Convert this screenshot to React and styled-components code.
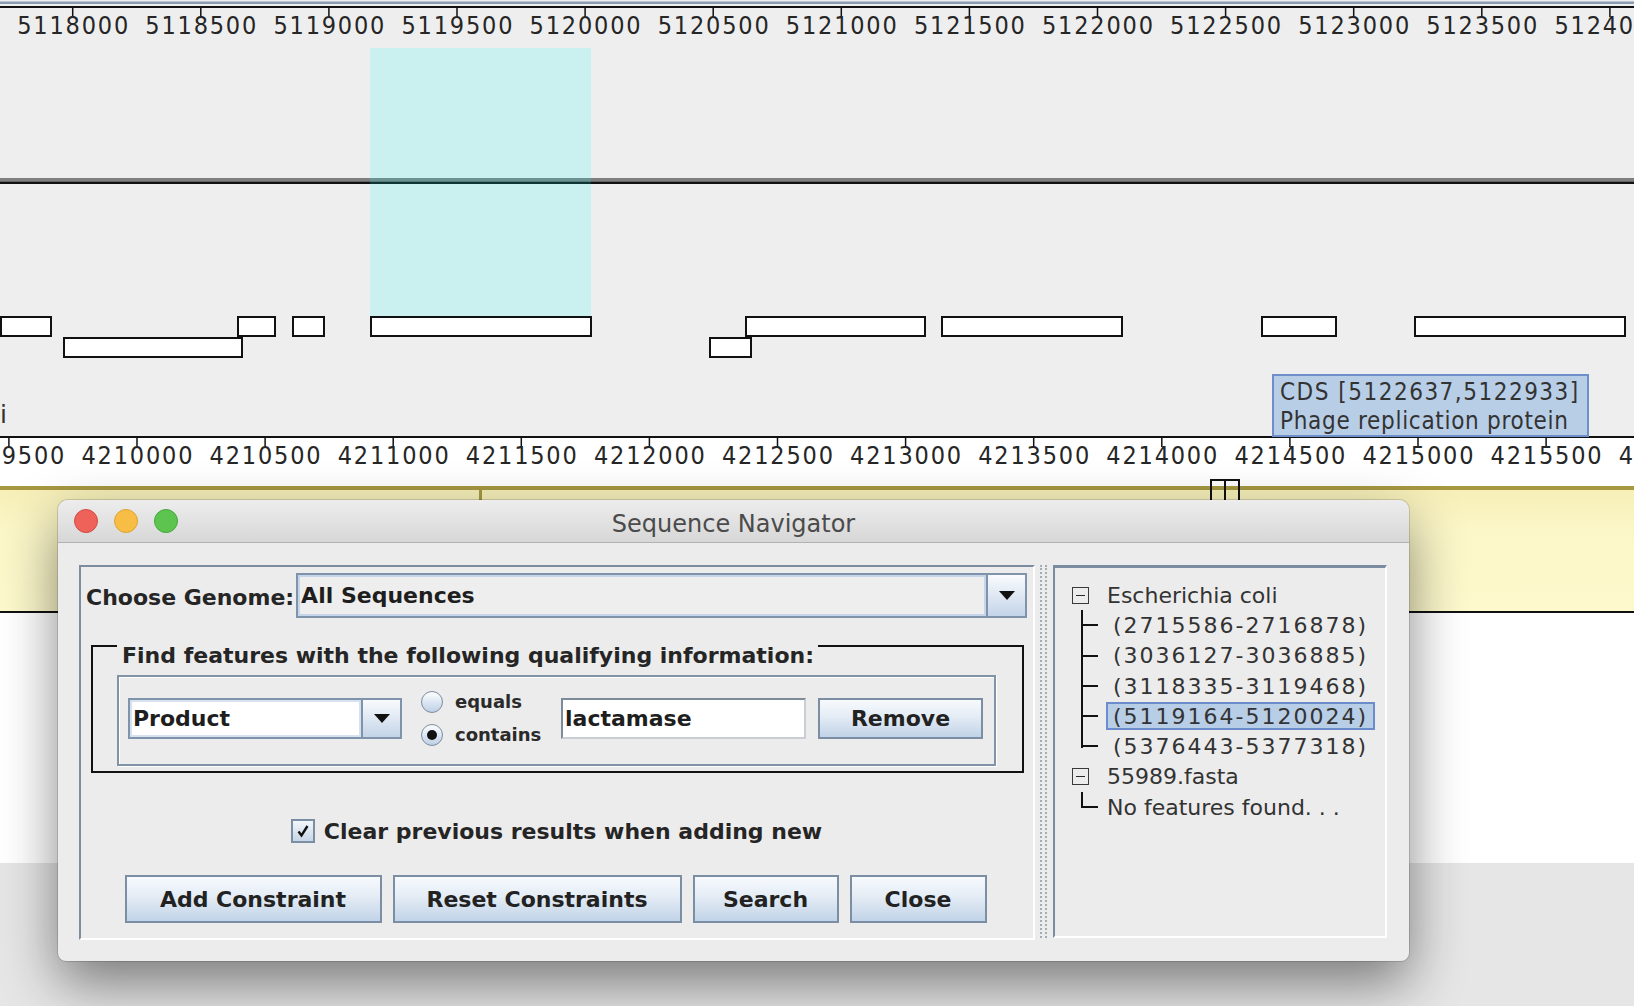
import React from 'react';
import styled, { createGlobalStyle } from 'styled-components';

const GlobalStyle = createGlobalStyle`
  html, body { margin: 0; padding: 0; }
  body {
    width: 1634px; height: 1006px; overflow: hidden;
    background: #e6e6e6;
    font-family: "DejaVu Sans", "Liberation Sans", sans-serif;
  }
`;

/* ---------- page / browser tracks ---------- */
const Page = styled.div`
  position: relative;
  width: 1634px;
  height: 1006px;
  display: flex;
  flex-direction: column;
  background: #e6e6e6;
  overflow: hidden;
`;

const TrackPanel = styled.div`
  flex: none;
  height: 436px;
  background: #eeeeee;
`;

const LowerRuler = styled.div`
  flex: none;
  height: 50px;
  background: #ffffff;
`;

const Chart = styled.svg`
  display: block;
  overflow: visible;
`;

const RulerText = styled.text`
  font-family: "DejaVu Sans Condensed", "DejaVu Sans", sans-serif;
  font-stretch: condensed;
  font-size: 25px;
  fill: #262626;
`;

const TrackLabel = styled.text`
  font-family: "DejaVu Sans", sans-serif;
  font-size: 25px;
  fill: #333;
`;

const Band = styled.div`
  flex: none;
  height: 121px;
  display: flex;
  border-top: 4px solid #a69840;
  border-bottom: 2px solid #111;
  background: linear-gradient(#f6efb8, #fcf7c8 35%, #fdf9cc);
`;

const BandSegment = styled.div`
  flex: ${p => (p.$w ? 'none' : '1')};
  width: ${p => (p.$w ? `${p.$w}px` : 'auto')};
  border-right: ${p => (p.$w ? '3px solid #a69840' : 'none')};
`;

const WhiteArea = styled.div`
  flex: none;
  height: 250px;
  background: #ffffff;
`;

const Floor = styled.div`
  flex: 1;
  background: #e6e6e6;
`;

const Tooltip = styled.div`
  position: absolute;
  left: 1272px;
  top: 374px;
  width: 317px;
  height: 63px;
  box-sizing: border-box;
  padding: 2px 6px 0 6px;
  background: #b8cee7;
  border: 2px solid #6f8fca;
  font-family: "DejaVu Sans Condensed", "DejaVu Sans", sans-serif;
  font-stretch: condensed;
  font-size: 24px;
  line-height: 29px;
  color: #333;
  white-space: nowrap;
`;

const TipLine = styled.div`
  letter-spacing: ${p => p.$ls}px;
`;

const Marker = styled.div`
  position: absolute;
  left: 1210px;
  top: 479px;
  width: 30px;
  height: 24px;
  box-sizing: border-box;
  border: 2px solid #111;
  border-bottom: none;
  &::after {
    content: '';
    position: absolute;
    left: 12px;
    top: 0;
    bottom: 0;
    width: 2px;
    background: #111;
  }
`;

/* ---------- dialog window ---------- */
const Window = styled.div`
  position: absolute;
  left: 58px;
  top: 500px;
  width: 1351px;
  height: 461px;
  display: flex;
  flex-direction: column;
  background: #ececec;
  border-radius: 10px 10px 8px 8px;
  overflow: hidden;
  box-shadow: 0 0 0 1px rgba(0, 0, 0, 0.14), 0 22px 55px rgba(0, 0, 0, 0.48);
  font-family: "DejaVu Sans", sans-serif;
  color: #222;
`;

const TitleBar = styled.div`
  flex: none;
  height: 42px;
  display: grid;
  grid-template-columns: 1fr auto 1fr;
  align-items: center;
  background: linear-gradient(#ededed, #d7d7d7);
  border-bottom: 1px solid #b2b2b2;
`;

const Lights = styled.div`
  display: flex;
  gap: 16px;
  padding-left: 16px;
`;

const Light = styled.span`
  width: 24px;
  height: 24px;
  box-sizing: border-box;
  border-radius: 50%;
  background: ${p => p.$c};
  border: 1px solid ${p => p.$b};
`;

const Title = styled.div`
  font-size: 24px;
  color: #4b4b4b;
  padding-top: 5px;
`;

const Body = styled.div`
  flex: 1;
  display: flex;
  align-items: flex-start;
  padding: 22px 22px 0 21px;
`;

const LeftPanel = styled.div`
  flex: none;
  width: 956px;
  height: 375px;
  box-sizing: border-box;
  border: 2px solid;
  border-color: #7d8da1 #ffffff #ffffff #7d8da1;
  padding: 6px 6px 0 5px;
  display: flex;
  flex-direction: column;
`;

const GenomeRow = styled.div`
  display: flex;
  align-items: center;
  height: 45px;
`;

const FieldLabel = styled.span`
  font-size: 22px;
  font-weight: bold;
  color: #252525;
  white-space: nowrap;
  padding-top: 4px;
`;

const ComboBox = styled.div`
  display: flex;
  box-sizing: border-box;
  height: ${p => p.$h}px;
  flex: ${p => (p.$w ? 'none' : '1')};
  width: ${p => (p.$w ? `${p.$w}px` : 'auto')};
  margin-left: ${p => p.$ml || 0}px;
  border: 2px solid #7f93aa;
  background: ${p => (p.$white ? '#ffffff' : '#eeeeee')};
`;

const ComboValue = styled.div`
  flex: 1;
  display: flex;
  align-items: center;
  padding-left: 3px;
  box-shadow: inset 0 0 0 2px ${p => (p.$white ? '#d6e2f0' : '#c6d6ea')};
  font-size: 22px;
  font-weight: bold;
  color: #1e1e1e;
  white-space: nowrap;
`;

const ComboArrow = styled.div`
  flex: none;
  width: ${p => p.$w}px;
  border-left: 2px solid #7f93aa;
  background: linear-gradient(#f8fbfe, #e2eaf4 45%, #c3d4e8);
  display: flex;
  align-items: center;
  justify-content: center;
`;

const Triangle = styled.span`
  width: 0;
  height: 0;
  border-left: 8px solid transparent;
  border-right: 8px solid transparent;
  border-top: 9px solid #111;
`;

const GroupBox = styled.div`
  position: relative;
  margin: 27px 3px 0 5px;
  height: 128px;
  box-sizing: border-box;
  border: 2px solid #111;
  padding: 28px 26px 5px 24px;
`;

const GroupTitle = styled.span`
  position: absolute;
  left: 24px;
  top: -6px;
  padding: 0 4px 0 5px;
  background: #ececec;
  font-size: 22px;
  font-weight: bold;
  line-height: 30px;
  color: #252525;
  white-space: nowrap;
`;

const ConstraintPanel = styled.div`
  height: 91px;
  box-sizing: border-box;
  border: 2px solid #8194a7;
  box-shadow: 1px 1px 0 #ffffff, inset 1px 1px 0 #ffffff;
  padding: 15px 9px 20px 9px;
  display: flex;
  align-items: center;
`;

const RadioGroup = styled.div`
  flex: none;
  display: flex;
  flex-direction: column;
  gap: 5px;
  margin-left: 19px;
  width: 120px;
`;

const RadioRow = styled.label`
  display: flex;
  align-items: center;
  gap: 12px;
  height: 28px;
  font-size: 18px;
  font-weight: bold;
  color: #2a2a2a;
`;

const RadioDot = styled.span`
  flex: none;
  width: 22px;
  height: 22px;
  box-sizing: border-box;
  border-radius: 50%;
  border: 1px solid #7b8ca1;
  background: linear-gradient(#ffffff, #d9e4f1 55%, #bfd0e5);
  display: flex;
  align-items: center;
  justify-content: center;
  &::after {
    content: '';
    width: 10px;
    height: 10px;
    border-radius: 50%;
    background: ${p => (p.$on ? '#111' : 'transparent')};
  }
`;

const TextField = styled.div`
  flex: none;
  width: 245px;
  height: 41px;
  box-sizing: border-box;
  margin-left: 20px;
  background: #ffffff;
  border: 2px solid;
  border-color: #7c8a99 #c9ced4 #c9ced4 #7c8a99;
  display: flex;
  align-items: center;
  padding-left: 2px;
  font-size: 22px;
  font-weight: bold;
  color: #1e1e1e;
`;

const Button = styled.button`
  flex: none;
  width: ${p => p.$w}px;
  height: ${p => p.$h || 48}px;
  margin-left: ${p => p.$ml || 0}px;
  box-sizing: border-box;
  border: 2px solid #7c8ea4;
  border-radius: 0;
  padding: 0;
  background: linear-gradient(#f7fafd, #e4ecf5 45%, #c1d3e8);
  font-family: "DejaVu Sans", sans-serif;
  font-size: 22px;
  font-weight: bold;
  color: #222;
`;

const CheckRow = styled.label`
  margin-top: 46px;
  height: 24px;
  display: flex;
  align-items: center;
  justify-content: center;
  gap: 9px;
  font-size: 22px;
  font-weight: bold;
  color: #252525;
`;

const CheckBox = styled.span`
  flex: none;
  width: 24px;
  height: 24px;
  box-sizing: border-box;
  border: 2px solid #7c8ea3;
  background: linear-gradient(#f3f7fb, #c6d5e7);
  display: flex;
  align-items: center;
  justify-content: center;
`;

const ButtonRow = styled.div`
  margin-top: 32px;
  display: flex;
  justify-content: center;
  gap: 11px;
  padding-right: 2px;
`;

const Divider = styled.div`
  flex: none;
  width: 3px;
  height: 373px;
  margin: 0 6px 0 5px;
  border-left: 2px dotted #a3adb8;
  border-right: 2px dotted #a3adb8;
`;

const TreePanel = styled.div`
  flex: none;
  width: 334px;
  height: 373px;
  box-sizing: border-box;
  border: 2px solid;
  border-top-width: 3px;
  border-color: #7c8ca0 #ffffff #ffffff #7c8ca0;
  padding: 12px 0 0 17px;
  display: flex;
  flex-direction: column;
`;

const TreeRow = styled.div`
  height: 30.3px;
  display: flex;
  align-items: center;
`;

const Toggle = styled.span`
  position: relative;
  flex: none;
  width: 17px;
  height: 17px;
  box-sizing: border-box;
  border: 1px solid #3a3a3a;
  &::after {
    content: '';
    position: absolute;
    left: 3px;
    right: 3px;
    top: 7px;
    height: 1px;
    background: #2a2a2a;
  }
`;

const Connector = styled.span`
  position: relative;
  flex: none;
  width: 26px;
  height: 100%;
  &::before {
    content: '';
    position: absolute;
    left: 9px;
    top: 0;
    bottom: ${p => (p.$last ? '14px' : '0')};
    width: 2px;
    background: #111;
  }
  &::after {
    content: '';
    position: absolute;
    left: 9px;
    top: 14px;
    width: 17px;
    height: 2px;
    background: #111;
  }
`;

const NodeLabel = styled.span`
  height: 28px;
  box-sizing: border-box;
  display: flex;
  align-items: center;
  margin-left: ${p => p.$ml}px;
  padding: 0 5px;
  border: 2px solid ${p => (p.$sel ? '#6c8dcb' : 'transparent')};
  background: ${p => (p.$sel ? '#b8cde6' : 'transparent')};
  font-size: 22px;
  color: #333;
  letter-spacing: ${p => (p.$num ? '2px' : '0')};
  white-space: nowrap;
`;

/* ---------- data ---------- */
const TOP_X0 = 72.7;
const LOW_X0 = 137;
const STEP = 128.1;

const topTicks = Array.from({ length: 13 }, (_, k) => ({
  x: TOP_X0 + k * STEP,
  label: String(5118000 + k * 500),
}));
const lowTicks = Array.from({ length: 14 }, (_, k) => ({
  x: LOW_X0 + (k - 1) * STEP,
  label: String(4209500 + k * 500),
}));

const features = [
  [0, 316, 52], [237, 316, 39], [292, 316, 33], [370, 316, 222],
  [745, 316, 181], [941, 316, 182], [1261, 316, 76], [1414, 316, 212],
  [63, 337, 180], [709, 337, 43],
];

const tree = [
  { group: true, label: 'Escherichia coli' },
  { label: '(2715586-2716878)', num: true },
  { label: '(3036127-3036885)', num: true },
  { label: '(3118335-3119468)', num: true },
  { label: '(5119164-5120024)', num: true, sel: true },
  { label: '(5376443-5377318)', num: true, last: true },
  { group: true, label: '55989.fasta' },
  { label: 'No features found. . .', last: true, flush: true },
];

function Ruler({ ticks, top, labelY }) {
  return (
    <>
      <rect x="0" y={top} width="1634" height="2" fill="#111" />
      {ticks.map(t => (
        <g key={t.label}>
          <rect x={t.x - 0.75} y={top + 2} width="1.5" height="9" fill="#111" />
          <RulerText x={t.x} y={labelY} textAnchor="middle" textLength="111" lengthAdjust="spacing">
            {t.label}
          </RulerText>
        </g>
      ))}
    </>
  );
}

export default function App() {
  return (
    <>
      <GlobalStyle />
      <Page>
        <TrackPanel>
          <Chart width="1634" height="436" viewBox="0 0 1634 436">
            <rect x="0" y="1.5" width="1634" height="2.5" fill="#8b9db1" />
            <Ruler ticks={topTicks} top={6} labelY={34} />
            <rect x="0" y="178" width="1634" height="3.5" fill="#7f7f7f" />
            <rect x="0" y="181.5" width="1634" height="2.5" fill="#111" />
            <rect x="370" y="48" width="221" height="268" fill="rgba(0,255,255,0.15)" />
            {features.map(([x, y, w], i) => (
              <rect key={i} x={x + 1} y={y + 1} width={w - 2} height="19" fill="#fff" stroke="#111" strokeWidth="2" />
            ))}
            <TrackLabel x="0" y="423">i</TrackLabel>
          </Chart>
        </TrackPanel>
        <LowerRuler>
          <Chart width="1634" height="50" viewBox="0 0 1634 50">
            <Ruler ticks={lowTicks} top={0} labelY={28} />
          </Chart>
        </LowerRuler>
        <Band>
          <BandSegment $w={479} />
          <BandSegment />
        </Band>
        <WhiteArea />
        <Floor />

        <Tooltip>
          <TipLine $ls={1.5}>CDS [5122637,5122933]</TipLine>
          <TipLine $ls={0.7}>Phage replication protein</TipLine>
        </Tooltip>
        <Marker />

        <Window>
          <TitleBar>
            <Lights>
              <Light $c="#ee6259" $b="#d24b43" />
              <Light $c="#f8bd45" $b="#dea333" />
              <Light $c="#5cc44f" $b="#43a83a" />
            </Lights>
            <Title>Sequence Navigator</Title>
            <span />
          </TitleBar>
          <Body>
            <LeftPanel>
              <GenomeRow>
                <FieldLabel>Choose Genome:</FieldLabel>
                <ComboBox $h={45} $ml={2}>
                  <ComboValue>All Sequences</ComboValue>
                  <ComboArrow $w={37}><Triangle /></ComboArrow>
                </ComboBox>
              </GenomeRow>
              <GroupBox>
                <GroupTitle>Find features with the following qualifying information:</GroupTitle>
                <ConstraintPanel>
                  <ComboBox $h={41} $w={274} $white>
                    <ComboValue $white>Product</ComboValue>
                    <ComboArrow $w={37}><Triangle /></ComboArrow>
                  </ComboBox>
                  <RadioGroup>
                    <RadioRow><RadioDot />equals</RadioRow>
                    <RadioRow><RadioDot $on />contains</RadioRow>
                  </RadioGroup>
                  <TextField>lactamase</TextField>
                  <Button $w={165} $h={41} $ml={12}>Remove</Button>
                </ConstraintPanel>
              </GroupBox>
              <CheckRow>
                <CheckBox>
                  <svg width="14" height="14" viewBox="0 0 14 14">
                    <path d="M2.5 7.5 L5.5 11.5 L11.5 2" fill="none" stroke="#111" strokeWidth="2.4" />
                  </svg>
                </CheckBox>
                Clear previous results when adding new
              </CheckRow>
              <ButtonRow>
                <Button $w={257}>Add Constraint</Button>
                <Button $w={289}>Reset Constraints</Button>
                <Button $w={146}>Search</Button>
                <Button $w={137}>Close</Button>
              </ButtonRow>
            </LeftPanel>
            <Divider />
            <TreePanel>
              {tree.map((n, i) =>
                n.group ? (
                  <TreeRow key={i}>
                    <Toggle />
                    <NodeLabel $ml={11}>{n.label}</NodeLabel>
                  </TreeRow>
                ) : (
                  <TreeRow key={i}>
                    <Connector $last={n.last} />
                    <NodeLabel $ml={n.flush ? 2 : 8} $num={n.num} $sel={n.sel}>{n.label}</NodeLabel>
                  </TreeRow>
                )
              )}
            </TreePanel>
          </Body>
        </Window>
      </Page>
    </>
  );
}
